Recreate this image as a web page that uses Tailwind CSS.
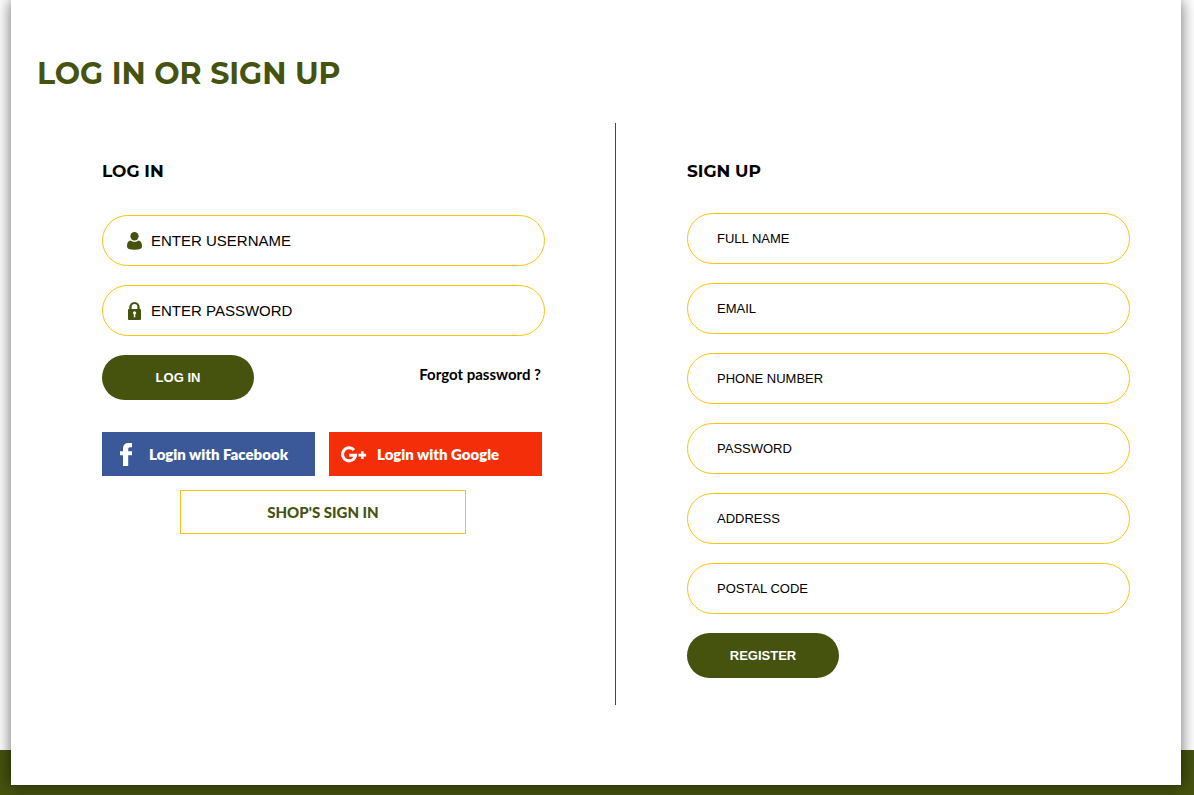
<!DOCTYPE html>
<html lang="en">
<head>
<meta charset="utf-8">
<meta name="viewport" content="width=device-width, initial-scale=1">
<title>Log in or sign up</title>
<script src="https://cdn.jsdelivr.net/npm/@tailwindcss/browser@4"></script>
</head>
<body class="flex min-h-screen flex-col overflow-x-hidden bg-white font-['Liberation_Sans',Arial,sans-serif] text-black">
<main class="relative z-10 -mb-[35px] ml-[11px] mr-[13px] flex-1 bg-white pb-20 shadow-[0_0_15px_rgba(0,0,0,0.6)]">
  <h1 class="px-[26px] pt-[54px] font-['Montserrat',Inter,sans-serif] text-[30px] leading-10 font-bold text-[#45530f]">LOG IN OR SIGN UP</h1>
  <div class="mt-[29px] grid md:grid-cols-2">
    <section class="pr-[51px] pl-[91px] pt-9">
      <h2 class="font-['Montserrat',Inter,sans-serif] text-[17px] leading-6 font-bold">LOG IN</h2>
      <form class="mt-8">
        <div class="flex flex-col gap-[19px]">
          <label class="flex h-[51px] items-center gap-2 rounded-full border border-[#fdc212] px-[23px] text-[#45530f]">
            <svg class="h-[18px] w-[17px] shrink-0" viewBox="0 0 17 18" fill="currentColor" aria-hidden="true"><ellipse cx="8.5" cy="4.2" rx="4.1" ry="4.2"/><path d="M4.3 8.6Q8.5 11.2 12.7 8.6C15.200 9.300 16 11.500 16 14.500Q16 17.800 8.500 17.800Q1 17.800 1 14.500C1 11.500 1.800 9.300 4.300 8.600Z"/></svg>
            <input type="text" aria-label="Username" placeholder="ENTER USERNAME" class="w-full min-w-0 bg-transparent text-[15px] leading-5 text-black outline-none placeholder:text-black">
          </label>
          <label class="flex h-[51px] items-center gap-2 rounded-full border border-[#fdc212] px-[23px] text-[#45530f]">
            <svg class="h-[18px] w-[17px] shrink-0" viewBox="0 0 17 18" fill="currentColor" aria-hidden="true"><path fill-rule="evenodd" d="M3.300 7V5.200a5.200 5.200 0 0 1 10.400 0V7H14q1 0 1 1v9q0 1-1 1H3q-1 0-1-1V8q0-1 1-1ZM5.600 7H11.400V5.200a2.900 3.100 0 0 0-5.800 0ZM7.800 12.500V15.200H9.300V12.500a1.600 1.600 0 1 0-1.500 0Z"/></svg>
            <input type="password" aria-label="Password" placeholder="ENTER PASSWORD" class="w-full min-w-0 bg-transparent text-[15px] leading-5 text-black outline-none placeholder:text-black">
          </label>
        </div>
        <div class="mt-[19px] flex items-start justify-between pr-1">
          <button type="submit" class="h-[45px] w-[152px] rounded-full bg-[#45530f] text-[13px] font-bold text-white">LOG IN</button>
          <a href="#" class="mt-[9px] font-['Lato',sans-serif] text-[15px] leading-5 font-bold">Forgot password ?</a>
        </div>
      </form>
      <div class="mt-8 grid grid-cols-2 gap-[14px] pr-[3px] font-['Lato',sans-serif] text-[15px] leading-5 font-extrabold text-white">
        <button type="button" class="flex h-11 items-center gap-[10px] bg-[#3b5998] pl-[11px]">
          <svg class="h-6 w-[26px] shrink-0" viewBox="0 0 26 24" fill="currentColor" aria-hidden="true"><path d="M10 24V13.300H7V9.200h3V6.500Q10 1 15.500 1H19V5.200H17Q15.200 5.200 15.200 6.800V9.200H19V13.300H15.200V24Z"/></svg>
          Login with Facebook
        </button>
        <button type="button" class="flex h-11 items-center gap-[10px] bg-[#f42e08] pl-3">
          <svg class="h-5 w-[26px] shrink-0" viewBox="0 0 26 20" fill="none" stroke="currentColor" aria-hidden="true"><path stroke-width="3" d="M13 6.100A6.500 6.500 0 1 0 14.500 11.300H8.300"/><path stroke-width="2.600" d="M21.300 7.300V14.900M17.500 11.100H25.100"/></svg>
          Login with Google
        </button>
      </div>
      <div class="mt-[14px] pr-px text-center">
        <button type="button" class="h-11 w-[286px] max-w-full border border-[#fdc212] font-['Lato',sans-serif] text-[15px] leading-5 font-black text-[#45530f]">SHOP'S SIGN IN</button>
      </div>
    </section>
    <section class="ml-[19px] border-l border-[#45530f] pt-9 pr-[51px] pb-[27px] pl-[71px]">
      <h2 class="font-['Montserrat',Inter,sans-serif] text-[17px] leading-6 font-bold">SIGN UP</h2>
      <form class="mt-[30px] flex flex-col gap-[19px] text-[13px]">
        <input type="text" aria-label="Full name" placeholder="FULL NAME" class="h-[51px] w-full rounded-full border border-[#fdc212] px-[29px] outline-none placeholder:text-black">
        <input type="email" aria-label="Email" placeholder="EMAIL" class="h-[51px] w-full rounded-full border border-[#fdc212] px-[29px] outline-none placeholder:text-black">
        <input type="tel" aria-label="Phone number" placeholder="PHONE NUMBER" class="h-[51px] w-full rounded-full border border-[#fdc212] px-[29px] outline-none placeholder:text-black">
        <input type="password" aria-label="Password" placeholder="PASSWORD" class="h-[51px] w-full rounded-full border border-[#fdc212] px-[29px] outline-none placeholder:text-black">
        <input type="text" aria-label="Address" placeholder="ADDRESS" class="h-[51px] w-full rounded-full border border-[#fdc212] px-[29px] outline-none placeholder:text-black">
        <input type="text" aria-label="Postal code" placeholder="POSTAL CODE" class="h-[51px] w-full rounded-full border border-[#fdc212] px-[29px] outline-none placeholder:text-black">
        <button type="submit" class="h-[45px] w-[152px] rounded-full bg-[#45530f] font-bold text-white">REGISTER</button>
      </form>
    </section>
  </div>
</main>
<footer class="h-[45px] bg-[#45530f]"></footer>
</body>
</html>
